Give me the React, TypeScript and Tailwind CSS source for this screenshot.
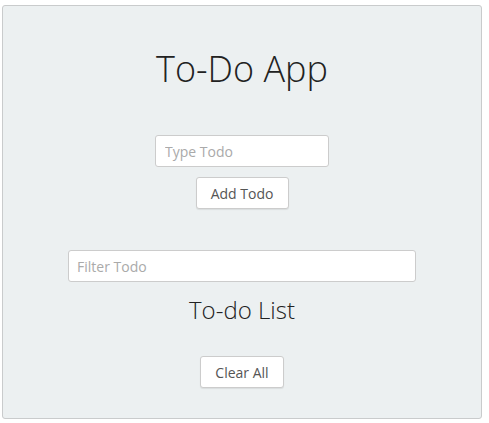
export default function App() {
  return (
    <div className="min-h-screen bg-white pl-[2px] pt-[5px] font-['Open_Sans',sans-serif]">
      <div className="flex h-[414px] w-[480px] flex-col items-center rounded-[3px] border border-[#c9cbcc] bg-[#ecf0f1] pt-[41px]">
        <h1 className="text-[36px] font-light leading-[43px] text-[#222]">To-Do App</h1>

        <input
          type="text"
          placeholder="Type Todo"
          className="mt-[45px] h-[32px] w-[174px] rounded-[3px] border border-[#ccc] bg-white px-[9px] text-[14px] text-[#555] placeholder:text-[#aaa] focus:outline-none"
        />
        <button
          type="button"
          className="mt-[10px] h-[32px] w-[93px] rounded-[3px] border border-[#ccc] bg-white text-[14px] text-[#555] shadow-[0_1px_1px_rgba(0,0,0,0.08)]"
        >
          Add Todo
        </button>

        <input
          type="text"
          placeholder="Filter Todo"
          className="mt-[41px] h-[32px] w-[348px] rounded-[3px] border border-[#ccc] bg-white px-[8px] text-[14px] text-[#555] placeholder:text-[#aaa] focus:outline-none"
        />
        <h3 className="mt-[13px] text-[24px] font-light leading-[29px] text-[#222]">To-do List</h3>

        <button
          type="button"
          className="mt-[32px] h-[32px] w-[84px] rounded-[3px] border border-[#ccc] bg-white text-[14px] text-[#555] shadow-[0_1px_1px_rgba(0,0,0,0.08)]"
        >
          Clear All
        </button>
      </div>
    </div>
  );
}
